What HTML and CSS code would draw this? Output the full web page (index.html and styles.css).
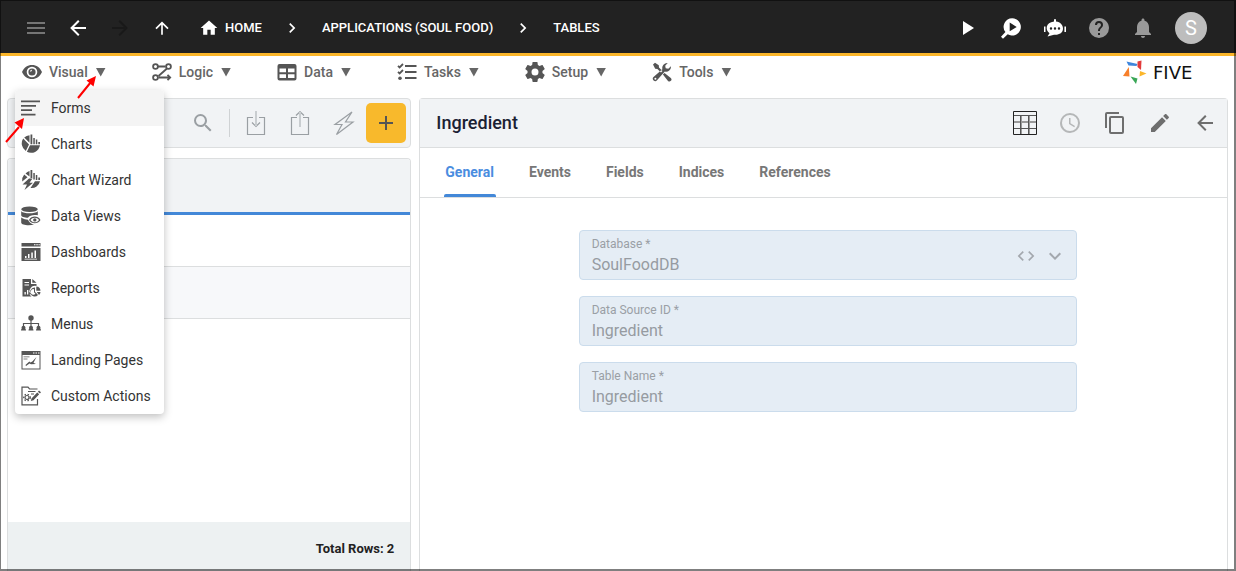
FILE: index.html
```html
<!DOCTYPE html>
<html lang="en">
<head>
<meta charset="utf-8">
<title>Five - Tables</title>
<link rel="stylesheet" href="styles.css">
</head>
<body>
<div class="app">
  <header class="topbar">
    <div class="nav-buttons">
      <button class="icon-btn dim" aria-label="Menu"><svg class="icon" viewBox="0 0 24 24"><path d="M3 6H21V8H3ZM3 11H21V13H3ZM3 16H21V18H3Z"/></svg></button>
      <button class="icon-btn" aria-label="Back"><svg class="icon" viewBox="0 0 24 24"><path d="M20 11V13H8L13.5 18.5L12.08 19.92L4.16 12L12.08 4.08L13.5 5.5L8 11Z"/></svg></button>
      <button class="icon-btn faint" aria-label="Forward" disabled><svg class="icon" viewBox="0 0 24 24"><path d="M4 11V13H16L10.5 18.5L11.92 19.92L19.84 12L11.92 4.08L10.5 5.5L16 11Z"/></svg></button>
      <button class="icon-btn" aria-label="Up"><svg class="icon small" viewBox="0 0 24 24"><path d="M13 20H11V8L5.5 13.5L4.08 12.08L12 4.16L19.92 12.08L18.5 13.5L13 8Z"/></svg></button>
    </div>
    <nav class="crumbs" aria-label="Breadcrumb">
      <a class="crumb" href="#home"><svg class="icon small" viewBox="0 0 24 24"><path d="M10 20V14H14V20H19V12H22L12 3L2 12H5V20Z"/></svg>HOME</a>
      <svg class="icon small" viewBox="0 0 24 24"><path d="M8.6 16.6L13.2 12L8.6 7.4L10 6L16 12L10 18Z"/></svg>
      <a class="crumb" href="#applications">APPLICATIONS (SOUL FOOD)</a>
      <svg class="icon small" viewBox="0 0 24 24"><path d="M8.6 16.6L13.2 12L8.6 7.4L10 6L16 12L10 18Z"/></svg>
      <a class="crumb" href="#tables">TABLES</a>
    </nav>
    <div class="top-actions">
      <button class="icon-btn" aria-label="Run"><svg class="icon" viewBox="0 0 24 24"><path d="M8 5.1V19.1L19 12.1Z"/></svg></button>
      <button class="icon-btn" aria-label="Inspect"><svg class="icon" viewBox="0 0 24 24"><path fill-rule="evenodd" d="M13.2 2.3A8.6 8.6 0 1 1 8.7 18.2L4 22.7L2 20.7L6.4 16.1A8.6 8.6 0 0 1 13.2 2.3ZM10.7 6.5V15.3L17.7 10.9Z"/></svg></button>
      <button class="icon-btn" aria-label="Assistant"><svg class="icon" viewBox="0 0 24 24"><path fill-rule="evenodd" d="M11 5.5V4A1 1 0 0 1 13 4V5.500C17.5 6 20 9 20 12.5C20 17 16 19.200 11 18.700L4.500 20.500L6.500 17.200C2 14 2.500 6.500 11 5.500ZM8 11.300A1.200 1.200 0 1 0 8 13.700A1.200 1.200 0 1 0 8 11.300ZM12 11.300A1.200 1.200 0 1 0 12 13.700A1.200 1.200 0 1 0 12 11.300ZM16 11.300A1.200 1.200 0 1 0 16 13.700A1.200 1.200 0 1 0 16 11.300ZM1 10.500H2.500V16H1ZM21.400 10.500H23V16H21.400Z"/></svg></button>
      <button class="icon-btn muted" aria-label="Help"><svg class="icon" viewBox="0 0 24 24"><path d="M15.07 11.25L14.17 12.17C13.45 12.89 13 13.5 13 15H11V14.5C11 13.39 11.45 12.39 12.17 11.67L13.41 10.41C13.78 10.05 14 9.55 14 9C14 7.89 13.1 7 12 7A2 2 0 0 0 10 9H8A4 4 0 0 1 12 5A4 4 0 0 1 16 9C16 9.88 15.64 10.67 15.07 11.25M13 19H11V17H13M12 2A10 10 0 0 0 2 12A10 10 0 0 0 12 22A10 10 0 0 0 22 12C22 6.47 17.5 2 12 2Z"/></svg></button>
      <button class="icon-btn muted" aria-label="Notifications"><svg class="icon" viewBox="0 0 24 24"><path d="M12 22c1.1 0 2-.9 2-2h-4c0 1.1.89 2 2 2zm6-6v-5c0-3.07-1.64-5.64-4.5-6.32V4c0-.83-.67-1.5-1.5-1.5s-1.5.67-1.5 1.5v.68C7.63 5.36 6 7.92 6 11v5l-2 2v1h16v-1l-2-2z"/></svg></button>
      <button class="avatar" aria-label="Account">S</button>
    </div>
  </header>

  <div class="menubar">
    <nav class="menus" aria-label="Main">
      <div class="menu-root">
        <button class="menu-btn" aria-expanded="true"><svg class="icon small" viewBox="0 0 20 20"><path fill-rule="evenodd" d="M10 3C5.5 3 2 5.5 0 10C2 14.5 5.5 17 10 17C14.5 17 18 14.5 20 10C18 5.5 14.5 3 10 3ZM10 4.7A5.3 5.3 0 1 1 10 15.3A5.3 5.3 0 1 1 10 4.7ZM10 6.4A3.6 3.6 0 1 0 13.6 10A3.6 3.6 0 0 0 10 6.4ZM8.3 9.8A1.6 1.6 0 0 1 9.9 7.8V8.8A1 1 0 0 0 9.2 9.8Z"/></svg>Visual<span class="caret"></span></button>
        <div class="dropdown" role="menu">
          <button class="option active" role="menuitem"><svg class="icon small" viewBox="0 0 20 20"><path d="M0 2.5H19V4.200H0ZM0 7H15V8.700H0ZM0 11.300H11V13H0ZM0 15.800H14.500V17.500H0Z"/></svg>Forms</button>
          <button class="option" role="menuitem"><svg class="icon small" viewBox="0 0 20 20"><path d="M8.500 1.200V8.800L3.200 3.500A9 9 0 0 1 8.500 1.200ZM2.200 4.600L8 10.600L4.800 17A9 9 0 0 1 2.200 4.600ZM9 11.300H19A9 9 0 0 1 5.900 17.800ZM9.500 .5H11.300V10.300H9.500ZM12.300 4H13.800V10.300H12.300ZM14.800 5.500H16.300V10.300H14.800ZM17.300 8H19V10.300H17.300Z"/></svg>Charts</button>
          <button class="option" role="menuitem"><svg class="icon small" viewBox="0 0 20 20"><path d="M8.500 1V6.500L4.500 3.500A9 9 0 0 1 8.500 1ZM3.200 4.600L6.500 7.200L1.200 11.500A9 9 0 0 1 3.200 4.600ZM9.500 0H11.300V9H9.500ZM12.300 3H13.800V9.500H12.300ZM14.800 5H16.300V10H14.800ZM17.300 7.500H19V10H17.300ZM8 8.500L1.500 14.500H6L3.500 20L12 12.800H8.500L11.500 8.500ZM14 11.200H19A8.500 8.500 0 0 1 9.500 18Z"/></svg>Chart Wizard</button>
          <button class="option" role="menuitem"><svg class="icon small" viewBox="0 0 20 20"><ellipse cx="8.500" cy="3.200" rx="8.300" ry="2.800"/><path fill-rule="evenodd" d="M.2 5.200C3 8 14 8 16.800 5.200V9.300C12 8.500 8.500 9.500 7 11.800C3.500 11.800 .2 10.800 .2 9.300ZM.2 11.500C2.500 13.200 5 13.500 7 13.700C8 16.500 10.500 18 13 18.500C8 20.200 .2 19 .2 16.500ZM8 13.900C10.500 9.500 16.800 9.500 19.500 13.900C16.800 18.300 10.500 18.300 8 13.900ZM9.500 13.900C11.500 17 16 17 18 13.900C16 10.900 11.500 10.900 9.500 13.900ZM13.800 12.200A1.700 1.700 0 1 1 13.800 15.600A1.700 1.700 0 1 1 13.800 12.200Z"/></svg>Data Views</button>
          <button class="option" role="menuitem"><svg class="icon small" viewBox="0 0 20 20"><path fill-rule="evenodd" d="M.5 1H19.500V4.500H.5ZM13 2.200V3.200H14.500V2.200ZM15.300 2.200V3.200H16.800V2.200ZM17.500 2.200V3.200H18.800V2.200ZM.5 6H19.500V19H.5ZM4 14V16H5.500V14ZM7 12V16H8.500V12ZM10.300 10.500V16H11.800V10.500ZM13.500 8.500V16H15V8.500ZM3.500 16.800V17.500H16V16.800Z"/></svg>Dashboards</button>
          <button class="option" role="menuitem"><svg class="icon small" viewBox="0 0 20 20"><path fill-rule="evenodd" d="M1.500 1H10V6H15.500V8A6 6 0 0 0 10.500 18.500H1.500ZM3.500 4V5H8V4ZM3.500 6.500V7.500H8V6.500ZM3.500 14V16.500H4.800V14ZM6 12V16.500H7.300V12ZM8.500 14V16.500H9.500V14ZM11.300 1L15.500 4.800H11.300ZM14 9.500V13.800L17 17A4.500 4.500 0 1 1 14 9.500ZM13 11.200A2.800 2.800 0 1 0 14.500 15.800L13 14.200ZM15.300 8.500A4.500 4.500 0 0 1 19.500 12.700H15.300ZM15.800 14H19.500A4 4 0 0 1 18 17Z"/></svg>Reports</button>
          <button class="option" role="menuitem"><svg class="icon small" viewBox="0 0 20 20"><path class="line" d="M10 5V14M2.500 14V9.500H17.500V14"/><circle cx="10" cy="4" r="2.700"/><circle cx="2.500" cy="13.700" r="2"/><circle cx="10" cy="13.700" r="2"/><circle cx="17.500" cy="13.700" r="2"/><path d="M0 16.500A2.500 2.500 0 0 1 5 16.500ZM7.500 16.500A2.500 2.500 0 0 1 12.500 16.500ZM15 16.500A2.500 2.500 0 0 1 20 16.500Z"/></svg>Menus</button>
          <button class="option" role="menuitem"><svg class="icon small" viewBox="0 0 20 20"><path fill-rule="evenodd" d="M.5 1H19.500V19.500H.5ZM1.500 5V18.500H18.500V5ZM12 2.500V3.500H13.500V2.500ZM14.500 2.500V3.500H16V2.500ZM17 2.500V3.500H18.500V2.500Z"/><path opacity=".5" d="M2.500 6H8.500V7.500H2.500ZM2.500 8.300H6.500V9.800H2.500Z"/><path d="M15.500 7L12.500 12.800L15 14L10 14.300L8.500 13.500L5 16L4.500 15L8.300 11.500L9.500 12.500L11.300 11.500Z"/></svg>Landing Pages</button>
          <button class="option" role="menuitem"><svg class="icon small" viewBox="0 0 20 20"><path class="line" d="M16.500 3H8.500L7 1.200H1V18.800H16.500V13"/><path class="line" d="M7 5.500H14.500M10 8H13"/><circle class="line" cx="6" cy="11.500" r="2"/><path class="line" stroke-dasharray="1.500 1.640" d="M9.300 11.500A3.300 3.300 0 1 1 2.700 11.500A3.300 3.300 0 1 1 9.300 11.500"/><path d="M18 4.500L20 6.300L18.900 7.500L16.900 5.700ZM16.200 6.400L18.200 8.200L12.500 14.300L9.800 15L10.500 12.400Z"/></svg>Custom Actions</button>
        </div>
      </div>
      <button class="menu-btn"><svg class="icon small" viewBox="0 0 20 20"><path class="line bold" d="M6 4.5H13.500M15 6.500L6.500 14M6.500 15.500H18M15.500 12.800L18.200 15.500L15.500 18.200"/><circle class="line bold" cx="3.500" cy="4.500" r="2.400"/><circle class="line bold" cx="16.500" cy="4.500" r="2.400"/><circle class="line bold" cx="3.500" cy="15.500" r="2.400"/></svg>Logic<span class="caret"></span></button>
      <button class="menu-btn"><svg class="icon small" viewBox="0 0 20 20"><path fill-rule="evenodd" d="M2.500 2H17.500A2 2 0 0 1 19.500 4V16.500A2 2 0 0 1 17.500 18.500H2.500A2 2 0 0 1 .5 16.500V4A2 2 0 0 1 2.500 2ZM2.500 6.500V10.300H9V6.500ZM11 6.500V10.300H17.500V6.500ZM2.500 12.300V16H9V12.300ZM11 12.300V16H17.500V12.300Z"/></svg>Data<span class="caret"></span></button>
      <button class="menu-btn"><svg class="icon small" viewBox="0 0 20 20"><path d="M8 3H19.500V5H8ZM8 9H19.500V11H8ZM8 15H19.500V17H8Z"/><path class="line bold" d="M1 3.800L2.600 5.400L6 2M1 9.800L2.600 11.400L6 8"/><circle cx="3" cy="16.200" r="1.800"/></svg>Tasks<span class="caret"></span></button>
      <button class="menu-btn"><svg class="icon small" viewBox="2 2 20 20"><path d="M12 15.5A3.5 3.5 0 0 1 8.5 12A3.5 3.5 0 0 1 12 8.5A3.5 3.5 0 0 1 15.5 12A3.5 3.5 0 0 1 12 15.5M19.43 12.97C19.47 12.65 19.5 12.33 19.5 12C19.5 11.67 19.47 11.34 19.43 11L21.54 9.37C21.73 9.22 21.78 8.95 21.66 8.73L19.66 5.27C19.54 5.05 19.27 4.96 19.05 5.05L16.56 6.05C16.04 5.66 15.5 5.32 14.87 5.07L14.5 2.42C14.46 2.18 14.25 2 14 2H10C9.75 2 9.54 2.18 9.5 2.42L9.13 5.07C8.5 5.32 7.96 5.66 7.44 6.05L4.95 5.05C4.73 4.96 4.46 5.05 4.34 5.27L2.34 8.73C2.21 8.95 2.27 9.22 2.46 9.37L4.57 11C4.53 11.34 4.5 11.67 4.5 12C4.5 12.33 4.53 12.65 4.57 12.97L2.46 14.63C2.27 14.78 2.21 15.05 2.34 15.27L4.34 18.73C4.46 18.95 4.73 19.03 4.95 18.95L7.44 17.94C7.96 18.34 8.5 18.68 9.13 18.93L9.5 21.58C9.54 21.82 9.75 22 10 22H14C14.25 22 14.46 21.82 14.5 21.58L14.87 18.93C15.5 18.67 16.04 18.34 16.56 17.94L19.05 18.95C19.27 19.03 19.54 18.95 19.66 18.73L21.66 15.27C21.78 15.05 21.73 14.78 21.54 14.63Z"/></svg>Setup<span class="caret"></span></button>
      <button class="menu-btn"><svg class="icon small" viewBox="0 0 20 20"><path d="M1 2.5L3 .8L6.8 3.2L7 5.5L10.5 9L9 10.5L5.4 7L3.2 6.800ZM12.500 11L18.800 16A2 2 0 0 1 16 18.900L10.900 12.600ZM19 4.300A5 5 0 0 1 12.800 9.600L5 18.300A2.400 2.400 0 0 1 1.500 15L10.400 7.200A5 5 0 0 1 15.700 1L13.200 3.800L13.700 6.300L16.300 6.800ZM3.400 15.700A1 1 0 1 0 3.400 17.700A1 1 0 1 0 3.400 15.700Z" fill-rule="evenodd"/></svg>Tools<span class="caret"></span></button>
    </nav>
    <a class="brand" href="#five"><svg class="brand-mark" viewBox="0 0 24 24"><path fill="#3f86dc" d="M3.500 1.500L14.500 4L13.500 6L5.500 5.500Z"/><path fill="#e23b3b" d="M14.500 1.500L18.500 .5L18 10L14.500 7Z"/><path fill="#fbb62a" d="M17 11L23.500 13.500L16.500 16.500Z"/><path fill="#3aa757" d="M7.500 16.500L14.500 18.500L13 24Z"/><path fill="#f77f2a" d="M5.800 7L6.500 16.500L0 16Z"/></svg><span class="brand-name">FIVE</span></a>
  </div>

  <main class="workspace">
    <section class="list-side">
      <div class="list-tools">
        <button class="icon-btn" aria-label="Search"><svg class="icon" viewBox="0 0 24 24"><path d="M9.5 3A6.5 6.5 0 0 1 16 9.5C16 11.11 15.41 12.59 14.44 13.73L14.71 14H15.5L20.5 19L19 20.5L14 15.5V14.71L13.73 14.44C12.59 15.41 11.11 16 9.5 16A6.5 6.5 0 0 1 3 9.5A6.5 6.5 0 0 1 9.5 3M9.5 5C7 5 5 7 5 9.5C5 12 7 14 9.5 14C12 14 14 12 14 9.5C14 7 12 5 9.5 5Z"/></svg></button>
        <span class="divider"></span>
        <div class="tool-group">
          <button class="icon-btn" aria-label="Import"><svg class="icon" viewBox="0 0 24 24"><path class="line" d="M9 6.500H3.500V23.500H20.500V6.500H15M8 11.500L12 15.500L16 11.500"/><path class="line pale" d="M12 0V15"/></svg></button>
          <button class="icon-btn" aria-label="Export"><svg class="icon" viewBox="0 0 24 24"><path class="line" d="M9 6.500H3.500V23.500H20.500V6.500H15M8 4.500L12 .7L16 4.500"/><path class="line pale" d="M12 1V16"/></svg></button>
          <button class="icon-btn" aria-label="Actions"><svg class="icon" viewBox="0 0 24 24"><path class="line" d="M20 1L3 13.500H10L4.500 23.500L21 11H13.500Z"/></svg></button>
        </div>
        <button class="add-btn" aria-label="Add"><svg class="icon" viewBox="0 0 24 24"><path d="M11 5H13V11H19V13H13V19H11V13H5V11H11Z"/></svg></button>
      </div>
      <div class="list-card">
        <table class="list-table">
          <thead><tr><th></th></tr></thead>
          <tbody><tr><td></td></tr><tr><td></td></tr></tbody>
        </table>
        <div class="list-footer">Total Rows: 2</div>
      </div>
    </section>

    <section class="detail">
      <div class="detail-head">
        <h1 class="detail-title">Ingredient</h1>
        <div class="detail-actions">
          <button class="icon-btn" aria-label="Grid"><svg class="icon" viewBox="0 0 24 24"><path class="pale-line" d="M1 11H23M8 5V23M16 5V23"/><path class="mid-line" d="M1 4.500H23M1 17.500H23M7.500 5V23M15.500 5V23"/><path class="ink-line" d="M.5 .5H23.500V23.500H.5Z"/></svg></button>
          <button class="icon-btn disabled" aria-label="History" disabled><svg class="icon" viewBox="0 0 24 24"><path d="M12 20A8 8 0 0 0 20 12A8 8 0 0 0 12 4A8 8 0 0 0 4 12A8 8 0 0 0 12 20M12 2A10 10 0 0 1 22 12A10 10 0 0 1 12 22C6.47 22 2 17.5 2 12A10 10 0 0 1 12 2M12.5 7V12.25L17 14.92L16.25 16.15L11 13V7Z"/></svg></button>
          <button class="icon-btn" aria-label="Copy"><svg class="icon" viewBox="0 0 24 24"><path d="M19 21H8V7H19M19 5H8A2 2 0 0 0 6 7V21A2 2 0 0 0 8 23H19A2 2 0 0 0 21 21V7A2 2 0 0 0 19 5M16 1H4A2 2 0 0 0 2 3V17H4V3H16Z"/></svg></button>
          <button class="icon-btn" aria-label="Edit"><svg class="icon" viewBox="0 0 24 24"><path d="M20.71 7.04C21.1 6.65 21.1 6 20.71 5.63L18.37 3.29C18 2.9 17.35 2.9 16.96 3.29L15.12 5.12L18.87 8.87M3 17.25V21H6.75L17.81 9.93L14.06 6.18Z"/></svg></button>
          <button class="icon-btn" aria-label="Close"><svg class="icon" viewBox="0 0 24 24"><path d="M20 11V13H8L13.5 18.5L12.08 19.92L4.16 12L12.08 4.08L13.5 5.5L8 11Z"/></svg></button>
        </div>
      </div>
      <div class="tabs" role="tablist">
        <button class="tab selected" role="tab" aria-selected="true">General</button>
        <button class="tab" role="tab">Events</button>
        <button class="tab" role="tab">Fields</button>
        <button class="tab" role="tab">Indices</button>
        <button class="tab" role="tab">References</button>
      </div>
      <form class="form">
        <div class="field">
          <div class="field-text">
            <label for="database">Database *</label>
            <select id="database" disabled><option>SoulFoodDB</option></select>
          </div>
          <button class="field-btn" type="button" aria-label="Open source" disabled><svg class="icon small" viewBox="0 0 24 24"><path d="M9.4 16.6L4.8 12L9.4 7.4L8 6L2 12L8 18ZM14.6 16.6L19.2 12L14.6 7.4L16 6L22 12L16 18Z"/></svg></button>
          <svg class="icon" viewBox="0 0 24 24"><path d="M7.41 8.58L12 13.17L16.59 8.58L18 10L12 16L6 10Z"/></svg>
        </div>
        <div class="field">
          <div class="field-text">
            <label for="source">Data Source ID *</label>
            <input id="source" type="text" value="Ingredient" disabled>
          </div>
        </div>
        <div class="field">
          <div class="field-text">
            <label for="table-name">Table Name *</label>
            <input id="table-name" type="text" value="Ingredient" disabled>
          </div>
        </div>
      </form>
    </section>
  </main>

  <svg class="pointers" viewBox="0 0 120 160" aria-hidden="true"><path class="shaft" d="M78 98L91 82M6 142L19 127"/><path class="head" d="M96 76L93.500 86.500L86.500 80.500ZM24 118L22 129L14.500 122.500Z"/></svg>
</div>
</body>
</html>
```

FILE: styles.css
```css
* { box-sizing: border-box; }

body {
  margin: 0;
  font-family: Roboto, "Liberation Sans", sans-serif;
  font-size: 14px;
  color: #333;
  background: #fff;
}

button {
  margin: 0;
  padding: 0;
  border: 0;
  background: none;
  font: inherit;
  color: inherit;
}

a { color: inherit; text-decoration: none; }

.app {
  position: relative;
  display: flex;
  flex-direction: column;
  min-height: 100vh;
}

/* Translucent window frame, drawn over the page edges */
.app::after {
  content: "";
  position: absolute;
  inset: 0;
  border: 1px solid rgba(0, 0, 0, 0.5);
  border-right-width: 2px;
  border-bottom-width: 2px;
  pointer-events: none;
}

.icon { display: block; flex: none; width: 24px; height: 24px; fill: currentColor; }
.icon.small { width: 20px; height: 20px; }
.line { fill: none; stroke: currentColor; stroke-width: 1.2; }
.line.bold { stroke-width: 1.8; }
.line.pale { stroke: #c9cdd0; stroke-width: 2; }
.icon-btn { display: grid; place-items: center; width: 24px; height: 24px; }

.topbar {
  display: flex;
  flex-shrink: 0;
  align-items: center;
  height: 56px;
  padding: 2px 29px 0 24px;
  border-bottom: 3px solid #fbb62a;
  background: #222;
  color: #fff;
}
.nav-buttons { display: flex; gap: 18px; }
.dim { color: #757575; }
.faint { color: #191919; }
.muted { color: #999; }
.crumbs { display: flex; align-items: center; gap: 20px; margin-left: 25px; font-size: 13px; font-weight: 500; }
.crumb { display: flex; align-items: center; gap: 6px; }
.top-actions { display: flex; align-items: center; gap: 20px; margin-left: auto; }
.avatar { width: 32px; height: 32px; border-radius: 50%; background: #bdbdbd; font-size: 20px; }

.menubar { display: flex; justify-content: space-between; align-items: center; height: 32px; padding: 0 25px 0 22px; }
.menus { display: flex; gap: 46px; }
.menu-root { position: relative; }
.menu-btn { display: flex; align-items: center; gap: 7px; height: 32px; font-weight: 500; color: #666; }
.menu-btn .icon { color: #555; }
.caret { width: 10px; height: 9px; margin-left: 1px; background: #666; clip-path: polygon(0 0, 100% 0, 50% 100%); }

.dropdown {
  position: absolute;
  z-index: 2;
  top: 34px;
  left: -7px;
  width: 149px;
  border-radius: 4px;
  background: #fff;
  box-shadow: 0 3px 8px rgba(0, 0, 0, 0.25);
  overflow: hidden;
}
.option { display: flex; align-items: center; gap: 10px; width: 100%; height: 36px; padding: 0 6px; white-space: nowrap; color: #333; }
.option .icon { color: #555; }
.option.active { background: #f4f4f4; }

.brand { display: flex; align-items: center; gap: 6px; height: 26px; color: #111; font: 18px "DejaVu Sans", sans-serif; }
.brand-mark { width: 24px; height: 24px; }
.brand-name { width: 58px; }

.workspace { display: grid; flex: 1; grid-template-columns: 1fr 2fr; gap: 8px; padding: 10px 8px 0 7px; }

.list-side { display: flex; flex-direction: column; gap: 10px; min-width: 0; }
.list-tools {
  display: flex;
  align-items: center;
  justify-content: flex-end;
  height: 50px;
  padding-right: 4px;
  border: 1px solid #dcdedf;
  border-radius: 4px;
  background: #f1f3f5;
  color: #9a9fa3;
}
.divider { width: 1px; height: 28px; margin: 0 14px; background: #cfd2d4; }
.tool-group { display: flex; gap: 20px; margin-right: 10px; }
.add-btn { display: grid; place-items: center; width: 40px; height: 40px; border-radius: 5px; background: #f8b92c; color: #555; }

.list-card {
  display: flex;
  flex: 1;
  flex-direction: column;
  border: 1px solid #dcdedf;
  border-bottom: 0;
  border-radius: 4px 4px 0 0;
  overflow: hidden;
}
.list-table { width: 100%; border-collapse: separate; border-spacing: 0; }
.list-table th { height: 56px; padding: 0; border-bottom: 3px solid #4388d8; background: #f1f3f5; }
.list-table td { height: 52px; padding: 0; border-bottom: 1px solid #dcdedf; }
.list-table tr:nth-child(even) td { background: #f7f8fa; }
.list-footer {
  margin-top: auto;
  padding: 18px 16px 13px;
  background: #edf1f2;
  color: #222;
  font-size: 13px;
  font-weight: 700;
  line-height: 18px;
  text-align: right;
}

.detail { min-width: 0; border: 1px solid #dcdedf; border-bottom: 0; border-radius: 4px 4px 0 0; }
.detail-head {
  display: flex;
  align-items: center;
  justify-content: space-between;
  height: 49px;
  padding: 0 10px 0 16px;
  border-bottom: 1px solid #dcdedf;
  background: #f1f3f5;
}
.detail-title { margin: 0; padding-bottom: 2px; font-size: 18px; font-weight: 500; color: #1b2133; }
.detail-actions { display: flex; gap: 21px; color: #6e6e6e; }
.disabled { color: #b5b7b8; }
.ink-line, .mid-line, .pale-line { fill: none; stroke: #222; stroke-width: 1; }
.mid-line { stroke: #555; }
.pale-line { stroke: #999; stroke-width: 2; }

.tabs { display: flex; gap: 32px; height: 50px; padding: 0 24px; border-bottom: 1px solid #dcdedf; }
.tab { border-bottom: 3px solid transparent; padding: 2px 2px 0 1px; font-weight: 700; color: #777; }
.tab.selected { position: relative; color: #4a8ddf; }
.tab.selected::after {
  content: "";
  position: absolute;
  inset: auto 0 -3px;
  height: 3px;
  border-radius: 2px 2px 0 0;
  background: #4388d8;
}

.form { display: flex; flex-direction: column; gap: 16px; max-width: 506px; margin: 0 auto; padding: 32px 0 32px 8px; }
.field {
  display: flex;
  align-items: center;
  gap: 7px;
  height: 50px;
  padding: 2px 9px 0 12px;
  border: 1px solid #cbdcec;
  border-radius: 4px;
  background: #e5edf5;
  color: #a3a8ae;
}
.field-text { display: flex; flex: 1; flex-direction: column; min-width: 0; }
.field-text label { font-size: 12px; line-height: 16px; color: #9a9fa5; }
.field-text input, .field-text select {
  width: 100%;
  height: 24px;
  margin: 0;
  padding: 0;
  border: 0;
  background: none;
  font: 16px Roboto, "Liberation Sans", sans-serif;
  color: #969ba1;
  opacity: 1;
  appearance: none;
}

.pointers { position: absolute; z-index: 3; top: 0; left: 0; width: 120px; height: 160px; pointer-events: none; }
.shaft { fill: none; stroke: #f00; stroke-width: 2; }
.head { fill: #f00; }
```
